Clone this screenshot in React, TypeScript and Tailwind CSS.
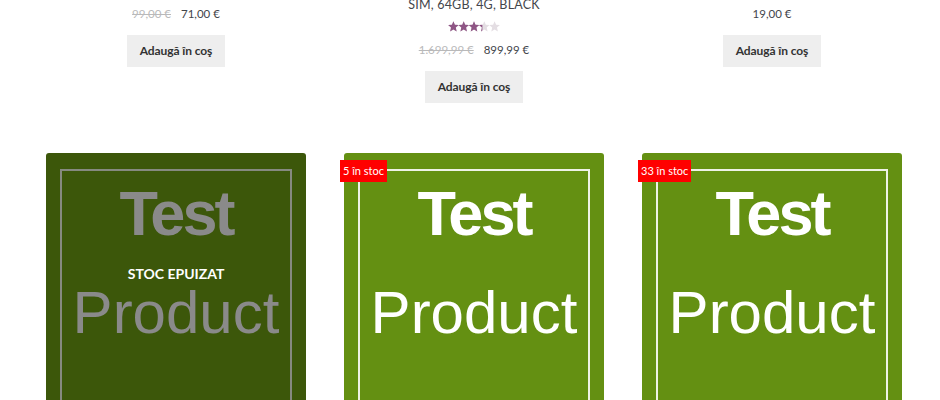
import React from "react";

const starPath =
  "M5 0 L6.5 3.5 L10.3 3.8 L7.4 6.3 L8.3 10.2 L5 8.1 L1.7 10.2 L2.6 6.3 L-0.3 3.8 L3.5 3.5 Z";

function Stars({ value }: { value: number }) {
  const w = value * 10.3;
  return (
    <svg width="52" height="11" viewBox="-0.4 -0.3 52 11">
      <defs>
        <clipPath id="starclip">
          <rect x="-1" y="-1" width={w + 1} height="12" />
        </clipPath>
      </defs>
      {[0, 1, 2, 3, 4].map((i) => (
        <path key={"b" + i} d={starPath} transform={`translate(${i * 10.3} 0)`} fill="#e4dee3" />
      ))}
      <g clipPath="url(#starclip)">
        {[0, 1, 2, 3, 4].map((i) => (
          <path key={"f" + i} d={starPath} transform={`translate(${i * 10.3} 0)`} fill="#8f5685" />
        ))}
      </g>
    </svg>
  );
}

function Button() {
  return (
    <button className="mt-[11px] h-[32px] w-[98px] bg-[#eeeeee] text-[12px] font-bold tracking-[-0.1px] text-[#333333]">
      Adaugă în coş
    </button>
  );
}

function Card({ badge, out }: { badge?: string; out?: boolean }) {
  const bg = out ? "bg-[#3c570a]" : "bg-[#649012]";
  const fg = out ? "text-[#8a8a8a]" : "text-white";
  const br = out ? "border-[#868a80]" : "border-[#eef2e6]";
  return (
    <div className="relative">
      <div className={`h-[260px] w-[260px] overflow-hidden rounded-[3px] ${bg} p-[14px] pt-[16px]`}>
        <div
          className={`flex h-[270px] flex-col items-center border-2 ${br} ${fg}`}
          style={{ fontFamily: "'Liberation Sans', Arial, sans-serif" }}
        >
          <div className="mt-[11px] text-[63px] font-bold leading-none tracking-[-3px]">Test</div>
          <div className="mt-[38px] text-[60px] leading-none">Product</div>
        </div>
      </div>
      {out && (
        <div className="absolute left-0 right-0 top-[110px] text-center text-[14px] font-bold text-white">
          STOC EPUIZAT
        </div>
      )}
      {badge && (
        <div className="absolute left-[-4px] top-[7px] flex h-[22px] items-center bg-[#ff0000] px-[3px] text-[11px] text-white">
          {badge}
        </div>
      )}
    </div>
  );
}

export default function App() {
  return (
    <div
      className="h-[400px] w-[940px] overflow-hidden bg-white text-[#43454b]"
      style={{ fontFamily: "Lato, 'Open Sans', sans-serif" }}
    >
      <div className="ml-[46px] mt-[-6px] grid w-[856px] grid-cols-[260px_260px_260px] gap-x-[38px] gap-y-[50px]">
        <div className="flex flex-col items-center pt-[10px]">
          <div className="flex h-[20px] items-center gap-[10px] text-[11.5px]">
            <span className="text-[#b9b9ba] line-through">99,00 €</span>
            <span>71,00 €</span>
          </div>
          <Button />
        </div>
        <div className="flex flex-col items-center">
          <div className="h-[22px] text-[12.5px] leading-[22px] tracking-[0.2px]">SIM, 64GB, 4G, BLACK</div>
          <div className="mt-[5px] h-[11px]">
            <Stars value={3.3} />
          </div>
          <div className="mt-[8px] flex h-[20px] items-center gap-[10px] text-[11.5px]">
            <span className="text-[#b9b9ba] line-through">1.699,99 €</span>
            <span>899,99 €</span>
          </div>
          <Button />
        </div>
        <div className="flex flex-col items-center pt-[10px]">
          <div className="flex h-[20px] items-center text-[11.5px]">
            <span>19,00 €</span>
          </div>
          <Button />
        </div>
        <Card out />
        <Card badge="5 în stoc" />
        <Card badge="33 în stoc" />
      </div>
    </div>
  );
}
